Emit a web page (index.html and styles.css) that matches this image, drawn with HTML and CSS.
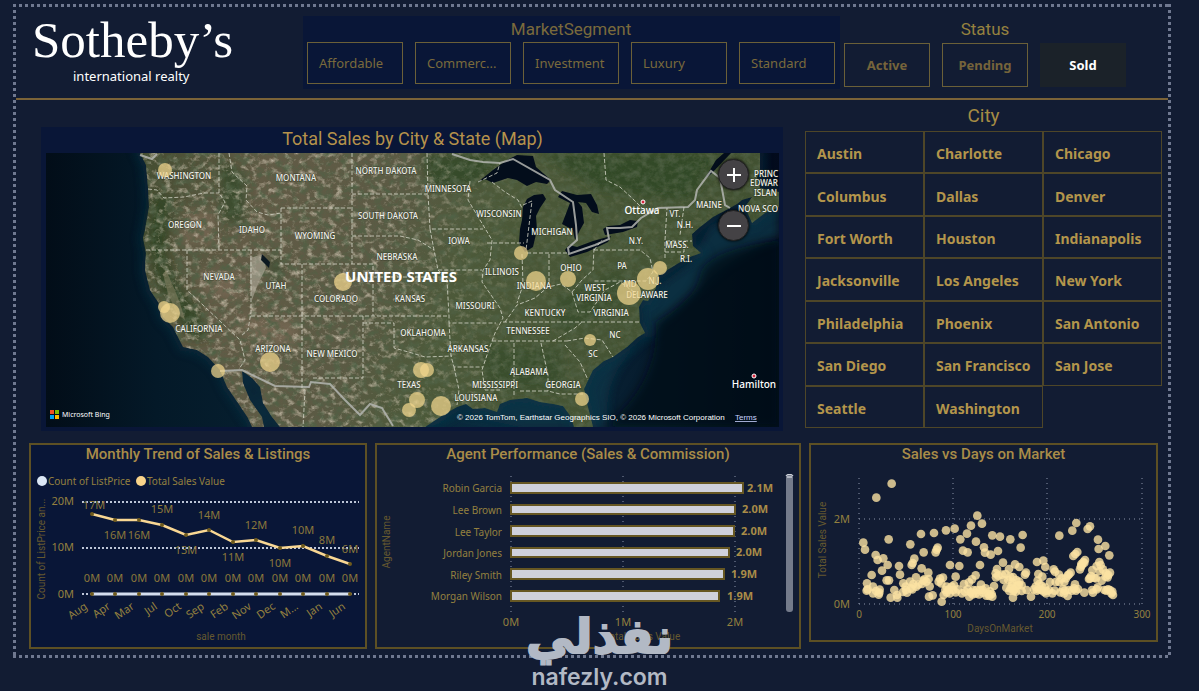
FILE: index.html
```html
<!DOCTYPE html>
<html lang="en">
<head>
<meta charset="utf-8">
<title>Sotheby's International Realty dashboard</title>
<link rel="stylesheet" href="styles.css">
</head>
<body>
<main class="report">
  <header class="header">
    <div class="brand">
      <h1 class="brand-name">Sotheby’s</h1>
      <p class="brand-sub">international realty</p>
    </div>
    <section class="slicer segment" aria-labelledby="segment-title">
      <h2 class="title" id="segment-title">MarketSegment</h2>
      <div class="tiles">
        <button class="tile">Affordable</button>
        <button class="tile">Commerc...</button>
        <button class="tile">Investment</button>
        <button class="tile">Luxury</button>
        <button class="tile">Standard</button>
      </div>
    </section>
    <section class="slicer status" aria-labelledby="status-title">
      <h2 class="title" id="status-title">Status</h2>
      <div class="tiles">
        <button class="tile">Active</button>
        <button class="tile">Pending</button>
        <button class="tile selected">Sold</button>
      </div>
    </section>
  </header>

  <div class="main-row">
    <section class="map-panel">
      <h2 class="title">Total Sales by City &amp; State (Map)</h2>
      <div class="map">
        <svg class="graphic" viewBox="46 153 733 274" role="img" aria-label="Map of sales by city">
          <defs>
            <linearGradient id="land" x1="0" x2="1" y1="0" y2=".15">
              <stop offset="0" stop-color="#434c30"/>
              <stop offset=".2" stop-color="#625b46"/>
              <stop offset=".42" stop-color="#5b5a44"/>
              <stop offset=".56" stop-color="#4c5939"/>
              <stop offset="1" stop-color="#405030"/>
            </linearGradient>
            <linearGradient id="sea" x1="0" x2="1">
              <stop offset="0" stop-color="#020d18"/>
              <stop offset=".15" stop-color="#041928"/>
              <stop offset=".6" stop-color="#0a2b3e"/>
              <stop offset=".85" stop-color="#061a2c"/>
              <stop offset="1" stop-color="#020a1c"/>
            </linearGradient>
            <filter id="grain" x="0" y="0" width="100%" height="100%">
              <feTurbulence type="fractalNoise" baseFrequency=".12 .14" numOctaves="5" seed="8" result="n"/>
              <feColorMatrix in="n" type="matrix" values="0 0 0 0 .08  0 0 0 0 .12  0 0 0 0 .06  2.2 0 0 0 -.95"/>
              <feComposite in2="SourceGraphic" operator="in"/>
            </filter>
            <filter id="light" x="0" y="0" width="100%" height="100%">
              <feTurbulence type="fractalNoise" baseFrequency=".14 .17" numOctaves="5" seed="31" result="n"/>
              <feColorMatrix in="n" type="matrix" values="0 0 0 0 .66  0 0 0 0 .59  0 0 0 0 .47  0 2 0 0 -.98"/>
              <feComposite in2="SourceGraphic" operator="in"/>
            </filter>
            <filter id="soft" x="-20%" y="-20%" width="140%" height="140%"><feGaussianBlur stdDeviation="5"/></filter>
            <linearGradient id="fade"><stop offset=".45" stop-color="#fff"/><stop offset=".65" stop-color="#fff" stop-opacity=".2"/></linearGradient>
            <mask id="west"><rect x="46" y="153" width="733" height="274" fill="url(#fade)"/></mask>
            <path id="coast" d="M140 153 L146 165 148 188 149 207 145 230 143 238 146 253 145 270 150 290 158 302 163 317 173 327 183 347 197 350 208 357 220 370 227 387 238 403 248 418 252 427 264 427 262 417 250 400 243 383 242 371 252 378 260 387 263 403 272 417 280 427 425 427 440 417 457 407 466 404 473 409 485 408 497 412 500 404 510 400 527 398 540 402 553 404 563 406 571 417 574 427 593 427 587 403 584 389 593 370 604 361 613 357 627 347 638 337 645 333 640 323 639 307 643 300 648 301 656 288 656 277 677 264 690 257 701 253 693 246 692 234 700 227 713 217 728 209 737 204 742 200 752 197 745 207 752 223 765 213 779 207 779 192 760 188 757 178 760 170 760 153Z"/>
            <clipPath id="mapclip"><rect x="46" y="153" width="733" height="274"/></clipPath>
          </defs>
          <g clip-path="url(#mapclip)">
            <rect x="46" y="153" width="733" height="274" fill="url(#sea)"/>
            <path d="M645 340 L640 300 L690 262 L710 225 L779 205 V238 Q720 262 700 290 Q670 310 655 335 Q600 365 608 427 H520 Q400 400 430 427 L600 360Z" fill="#0d3647" opacity=".8" filter="url(#soft)"/>
            <use href="#coast" fill="none" stroke="#0f3647" stroke-width="8" opacity=".6" filter="url(#soft)"/>
            <path d="M655 322 Q695 300 700 275 T779 240 V427 H605 Q660 380 655 322Z" fill="#010818" opacity=".75" filter="url(#soft)"/>
            <use href="#coast" fill="url(#land)"/>
            <g filter="url(#soft)" opacity=".7">
              <path d="M155 195 L170 198 165 252 178 285 200 310 208 340 190 340 158 285 148 240Z" fill="#27411f"/>
              <path d="M220 160 L245 175 245 225 222 220Z" fill="#2e4628"/>
              <path d="M272 250 L282 265 278 290 270 270Z" fill="#2f472a"/>
              <path d="M185 210 L215 210 215 245 178 245Z M195 270 L245 275 240 300 210 295Z M230 315 L300 320 295 350 250 340Z" fill="#7a6b56"/>
              <path d="M420 153 L510 153 475 185 430 190Z M540 153 L720 153 690 200 600 190Z" fill="#2c4423"/>
              <path d="M555 300 L620 270 625 300 560 335Z M480 345 L560 350 565 390 490 390Z" fill="#354c29"/>
            </g>
            <g mask="url(#west)"><use href="#coast" filter="url(#light)"/></g>
            <use href="#coast" filter="url(#grain)"/>
            <path d="M250 258 L263 254 266 268 258 284 252 300 250 280Z" fill="#b9b4a5" opacity=".55"/>
            <path d="M262 254 L270 262 269 268 261 260Z" fill="#0c1820"/>
            <path d="M166 270 L174 288 180 303 185 320 177 314 168 294 163 274Z" fill="#8b8567" opacity=".5"/>

            <g fill="#030d1b">
              <path d="M478 182 L493 170 507 160 517 155 533 156 536 167 551 180 547 184 536 182 527 186 517 180 508 178 493 183 485 179Z"/>
              <path d="M543 194 L546 199 540 208 536 216 537 230 533 247 525 252 519 243 520 229 522 220 523 207 527 199 534 195Z"/>
              <path d="M562 191 L577 195 591 194 597 205 599 214 592 212 586 203 578 202 582 207 584 223 580 230 575 240 573 230 562 224 567 211 570 203 558 197Z"/>
              <path d="M565 250 L570 257 587 252 608 242 611 236 593 241 577 247 569 245Z"/>
              <path d="M603 229 L605 235 623 232 637 227 638 221 630 220 620 225 608 226Z"/>
              <path d="M704 180 L716 160 724 153 731 153 712 173Z"/>
            </g>
            <g class="solid-border">
              <path d="M452 154 L470 160 483 162 500 163 513 159 550 180 555 190 573 202 576 225 577 240 568 248 569 254 595 245 609 239 607 228 620 228 632 227 641 218 658 208 688 207 695 200 697 190 711 171 720 178 725 205 730 208"/>
              <path d="M220 371 L242 370 275 386 309 387 311 382 330 384 345 400 360 415 370 404 382 408 393 426"/>
              <path d="M140 155 L152 159 157 154"/>
            </g>
            <g class="state-border">
              <path d="M148 189 L157 190 164 198 184 197 204 193 219 193 M219 153 V193 L225 202 218 215 219 250 M146 250 H281 M229 153 L232 172 247 186 246 200 257 212 268 215 281 213 M281 208 H352 M281 208 V264 H373 V316 M352 153 V264 M251 250 V312 L248 330 241 336 M302 264 V388 M251 316 H449 M187 250 V290 L240 340 245 360 239 369 M363 316 V378 H311 M363 323 H394 V348 L412 353 425 357 452 356 M305 390 L303 427"/>
              <path d="M352 194 H428 M352 236 H400 L418 240 434 250 M373 277 H437 M427 153 L428 194 430 229 H483 M430 229 L434 250 438 270 H482 M438 270 L447 280 449 316 V323 H496 M449 323 L451 356 454 367 H483 M454 367 L459 390 457 405"/>
              <path d="M470 181 L468 200 483 225 492 240 490 260 483 270 482 282 500 308 503 318 495 333 487 355 482 370 485 390 H500 M492 182 L505 192 518 200 522 208 M487 243 H524 M522 254 L523 285 517 303 M527 253 H567 M549 254 V285 M505 322 L517 305 535 298 548 287 561 284 572 292 582 280 593 270 594 248 M503 322 H640 M492 341 H567 M514 343 V397 M541 343 L548 375 V391 M520 391 H548 L560 394 H583 M565 345 L580 362 588 380 M567 341 L585 338 602 340 613 357 M553 341 L575 328 582 322"/>
              <path d="M594 250 H640 L650 258 653 272 646 281 H594 M572 292 L578 312 590 312 605 290 620 282 637 294 M594 250 L602 240 M665 258 V240 L667 208 M684 207 L680 235 M666 241 H692 M665 252 H684 V242 M604 153 L606 180 620 187 632 198 642 208 M478 182 L497 173 500 163 M523 205 L532 201 526 250"/>
            </g>
            <g class="map-label">
              <text x="184" y="179">WASHINGTON</text><text x="296" y="181">MONTANA</text><text x="386" y="174">NORTH DAKOTA</text><text x="448" y="192">MINNESOTA</text>
              <text x="185" y="228">OREGON</text><text x="252" y="233">IDAHO</text><text x="315" y="239">WYOMING</text><text x="388" y="219">SOUTH DAKOTA</text><text x="499" y="217">WISCONSIN</text>
              <text x="397" y="260">NEBRASKA</text><text x="459" y="244">IOWA</text><text x="552" y="235">MICHIGAN</text><text x="219" y="280">NEVADA</text><text x="276" y="289">UTAH</text>
              <text x="336" y="302">COLORADO</text><text x="410" y="302">KANSAS</text><text x="475" y="309">MISSOURI</text><text x="502" y="275">ILLINOIS</text><text x="534" y="289">INDIANA</text><text x="571" y="271">OHIO</text>
              <text x="622" y="269">PA</text><text x="636" y="244">N.Y.</text><text x="595" y="291">WEST</text><text x="594" y="301">VIRGINIA</text><text x="611" y="316">VIRGINIA</text><text x="630" y="287">MD</text><text x="655" y="284">N.J.</text><text x="647" y="298">DELAWARE</text>
              <text x="545" y="316">KENTUCKY</text><text x="528" y="334">TENNESSEE</text><text x="199" y="332">CALIFORNIA</text><text x="273" y="352">ARIZONA</text><text x="332" y="357">NEW MEXICO</text><text x="423" y="336">OKLAHOMA</text>
              <text x="468" y="352">ARKANSAS</text><text x="409" y="388">TEXAS</text><text x="529" y="375">ALABAMA</text><text x="495" y="388">MISSISSIPPI</text><text x="563" y="388">GEORGIA</text><text x="476" y="401">LOUISIANA</text><text x="615" y="338">NC</text><text x="593" y="357">SC</text>
              <text x="675" y="217">VT.</text><text x="685" y="228">N.H.</text><text x="677" y="248">MASS.</text><text x="686" y="262">R.I.</text><text x="709" y="208">MAINE</text>
              <text class="at-start" x="754" y="177">PRINC</text><text class="at-start" x="750" y="186">EDWAR</text><text class="at-start" x="754" y="196">ISLAN</text><text class="at-start" x="738" y="212">NOVA SCO</text>
            </g>
            <g class="bubbles">
              <circle cx="165" cy="170" r="7"/><circle cx="164" cy="307" r="6"/><circle cx="170" cy="313" r="10"/><circle cx="218" cy="371" r="7"/><circle cx="270" cy="362" r="10"/><circle cx="343" cy="282" r="9"/>
              <circle cx="421" cy="370" r="8"/><circle cx="427" cy="370" r="7"/><circle cx="417" cy="400" r="8"/><circle cx="409" cy="410" r="7"/><circle cx="441" cy="406" r="10"/>
              <circle cx="521" cy="253" r="7"/><circle cx="536" cy="281" r="10"/><circle cx="568" cy="279" r="8"/><circle cx="590" cy="340" r="6"/><circle cx="582" cy="399" r="7"/><circle cx="629" cy="293" r="12"/><circle cx="648" cy="279" r="11"/><circle cx="660" cy="268" r="7"/>
            </g>
            <g class="map-city"><circle cx="643" cy="202" r="2"/><circle cx="754" cy="376" r="2"/><text x="642" y="214">Ottawa</text><text x="754" y="388">Hamilton</text></g>
            <text class="country" x="401" y="282">UNITED STATES</text>
            <path fill="#f25022" d="M50 410h4v4h-4z"/><path fill="#7fba00" d="M55 410h4v4h-4z"/><path fill="#00a4ef" d="M50 415h4v4h-4z"/><path fill="#ffb900" d="M55 415h4v4h-4z"/>
            <text class="bing" x="62" y="417">Microsoft Bing</text>
            <text class="credit" x="457" y="420">© 2026 TomTom, Earthstar Geographics SIO, © 2026 Microsoft Corporation</text>
            <a href="#terms"><text class="credit terms" x="735" y="420">Terms</text></a>
          </g>
        </svg>
        <div class="zoom-controls">
          <button class="zoom-button" aria-label="Zoom in"><svg viewBox="0 0 16 16"><path d="M8 1v14M1 8h14"/></svg></button>
          <button class="zoom-button" aria-label="Zoom out"><svg viewBox="0 0 16 16"><path d="M1 8h14"/></svg></button>
        </div>
      </div>
    </section>

    <section class="city-panel" aria-labelledby="city-title">
      <h2 class="title" id="city-title">City</h2>
      <div class="city-grid">
        <button class="city">Austin</button><button class="city">Charlotte</button><button class="city">Chicago</button>
        <button class="city">Columbus</button><button class="city">Dallas</button><button class="city">Denver</button>
        <button class="city">Fort Worth</button><button class="city">Houston</button><button class="city">Indianapolis</button>
        <button class="city">Jacksonville</button><button class="city">Los Angeles</button><button class="city">New York</button>
        <button class="city">Philadelphia</button><button class="city">Phoenix</button><button class="city">San Antonio</button>
        <button class="city">San Diego</button><button class="city">San Francisco</button><button class="city">San Jose</button>
        <button class="city">Seattle</button><button class="city">Washington</button>
      </div>
    </section>
  </div>

  <div class="chart-row">
    <section class="card trend">
      <h2 class="title">Monthly Trend of Sales &amp; Listings</h2>
      <svg class="graphic" viewBox="31 467 334 180" role="img" aria-label="Line chart of sales by month">
        <circle cx="42" cy="481" r="5" fill="#dbe7f5"/><text class="label name" x="48" y="485">Count of ListPrice</text>
        <circle cx="141" cy="481" r="5" fill="#f9d48a"/><text class="label name" x="147" y="485">Total Sales Value</text>
        <g class="grid-heavy"><path d="M82 502H359"/><path d="M82 548H359"/><path d="M82 594H359"/></g>
        <text class="axis-title" text-anchor="middle" transform="translate(45 549) rotate(-90)">Count of ListPrice an...</text>
        <g class="label end"><text x="74" y="505">20M</text><text x="74" y="551">10M</text><text x="74" y="598">0M</text></g>
        <path d="M92 514 115 520 139 520 162 525 186 535 209 530 233 542 256 540 280 548 303 546 327 556 350 564" fill="none" stroke="#f9d793" stroke-width="2.5"/>
        <path d="M92 594H350" stroke="#d5deee" stroke-width="3"/>
        <g fill="#6f5a1c">
          <circle cx="92" cy="514" r="2"/><circle cx="115" cy="520" r="2"/><circle cx="139" cy="520" r="2"/><circle cx="162" cy="525" r="2"/><circle cx="186" cy="535" r="2"/><circle cx="209" cy="530" r="2"/><circle cx="233" cy="542" r="2"/><circle cx="256" cy="540" r="2"/><circle cx="280" cy="548" r="2"/><circle cx="303" cy="546" r="2"/><circle cx="327" cy="556" r="2"/><circle cx="350" cy="564" r="2"/>
          <circle cx="92" cy="594" r="2"/><circle cx="115" cy="594" r="2"/><circle cx="139" cy="594" r="2"/><circle cx="162" cy="594" r="2"/><circle cx="186" cy="594" r="2"/><circle cx="209" cy="594" r="2"/><circle cx="233" cy="594" r="2"/><circle cx="256" cy="594" r="2"/><circle cx="280" cy="594" r="2"/><circle cx="303" cy="594" r="2"/><circle cx="327" cy="594" r="2"/><circle cx="350" cy="594" r="2"/>
        </g>
        <g class="label mid dim">
          <text x="94" y="509">17M</text><text x="115" y="539">16M</text><text x="139" y="539">16M</text><text x="162" y="513">15M</text><text x="186" y="554">13M</text><text x="209" y="519">14M</text><text x="233" y="561">11M</text><text x="256" y="529">12M</text><text x="280" y="567">10M</text><text x="303" y="534">10M</text><text x="327" y="544">8M</text><text x="350" y="553">6M</text>
          <text x="92" y="582">0M</text><text x="115" y="582">0M</text><text x="139" y="582">0M</text><text x="162" y="582">0M</text><text x="186" y="582">0M</text><text x="209" y="582">0M</text><text x="233" y="582">0M</text><text x="256" y="582">0M</text><text x="280" y="582">0M</text><text x="303" y="582">0M</text><text x="327" y="582">0M</text><text x="350" y="582">0M</text>
        </g>
        <g class="label end">
          <text transform="translate(88 608) rotate(-35)">Aug</text><text transform="translate(111 608) rotate(-35)">Apr</text><text transform="translate(135 608) rotate(-35)">Mar</text><text transform="translate(158 608) rotate(-35)">Jul</text><text transform="translate(182 608) rotate(-35)">Oct</text><text transform="translate(205 608) rotate(-35)">Sep</text><text transform="translate(229 608) rotate(-35)">Feb</text><text transform="translate(252 608) rotate(-35)">Nov</text><text transform="translate(276 608) rotate(-35)">Dec</text><text transform="translate(299 608) rotate(-35)">M...</text><text transform="translate(323 608) rotate(-35)">Jan</text><text transform="translate(346 608) rotate(-35)">Jun</text>
        </g>
        <text class="axis-title mid" x="221" y="640">sale month</text>
      </svg>
    </section>

    <section class="card agents">
      <h2 class="title">Agent Performance (Sales &amp; Commission)</h2>
      <svg class="graphic" viewBox="377 466 422 181" role="img" aria-label="Bar chart of sales by agent">
        <g class="grid-light"><path d="M511 476V614"/><path d="M623 476V614"/><path d="M735 476V614"/></g>
        <text class="axis-title mid" transform="translate(390 542) rotate(-90)">AgentName</text>
        <g class="label name end"><text x="502" y="492">Robin Garcia</text><text x="502" y="514">Lee Brown</text><text x="502" y="536">Lee Taylor</text><text x="502" y="557">Jordan Jones</text><text x="502" y="579">Riley Smith</text><text x="502" y="600">Morgan Wilson</text></g>
        <g class="bar"><rect x="511" y="483" width="232" height="10"/><rect x="511" y="505" width="224" height="9"/><rect x="511" y="526" width="223" height="10"/><rect x="511" y="548" width="218" height="9"/><rect x="511" y="569" width="213" height="10"/><rect x="511" y="591" width="208" height="10"/></g>
        <g class="value"><text x="747" y="492">2.1M</text><text x="742" y="513">2.0M</text><text x="741" y="535">2.0M</text><text x="736" y="556">2.0M</text><text x="731" y="578">1.9M</text><text x="727" y="600">1.9M</text></g>
        <g class="label mid"><text x="511" y="626">0M</text><text x="623" y="626">1M</text><text x="735" y="626">2M</text></g>
        <text class="axis-title mid" x="642" y="640">Total Sales Value</text>
        <rect x="786" y="474" width="7" height="138" rx="3" fill="#747b8b"/><path d="M786 476c0-2 7-2 7 0M787 477h5" fill="none" stroke="#eef1f6"/>
      </svg>
    </section>

    <section class="card days">
      <h2 class="title">Sales vs Days on Market</h2>
      <svg class="graphic" viewBox="811 467 345 173" role="img" aria-label="Scatter chart of sales against days on market">
        <g class="grid-light"><path d="M859 478V604"/><path d="M953 478V604"/><path d="M1047 478V604"/><path d="M1142 478V604"/><path d="M859 519H1142"/><path d="M859 604H1142"/></g>
        <text class="axis-title mid" transform="translate(826 540) rotate(-90)">Total Sales Value</text>
        <g class="label end"><text x="850" y="523">2M</text><text x="850" y="608">0M</text></g>
        <g class="label name mid"><text x="859" y="618">0</text><text x="953" y="618">100</text><text x="1047" y="618">200</text><text x="1142" y="618">300</text></g>
        <text class="axis-title mid" x="1000" y="632">DaysOnMarket</text>
        <g id="listings" class="dots" transform="translate(800 430) scale(.3333)"></g>
      </svg>
    </section>
  </div>
</main>
<div class="watermark">
  <span class="watermark-ar" lang="ar" dir="rtl">نفذلي</span>
  <span class="watermark-en">nafezly.com</span>
</div>
<script src="listings.js"></script>
</body>
</html>
```

FILE: listings.js
```js
const listings = [
  [229,203],[275,161],[190,338],[195,359],[266,328],[227,375],[233,390],[250,385],[246,422],[263,405],[215,435],[297,408],[300,434],
  [201,460],[203,478],[200,482],[219,470],[219,490],[239,479],[236,494],[228,483],[238,488],[260,451],[267,451],[272,503],[283,480],[292,503],[291,495],[309,486],[317,470],[310,460],[330,455],[321,488],[318,480],[332,475],
  [331,343],[363,312],[402,309],[438,301],[464,296],[371,367],[407,367],[413,353],[410,359],[343,386],[335,405],[338,399],[365,415],[385,428],[348,442],[340,462],[355,464],[366,462],[373,448],[379,455],[349,470],[337,478],[389,469],[370,452],[386,447],
  [387,500],[398,496],[425,515],[420,446],[429,443],[424,460],[416,455],[450,405],[478,408],[467,440],[431,495],[440,487],[446,479],[440,470],[455,470],[460,480],[467,487],[462,465],[449,490],[436,480],[474,478],[486,490],[495,485],[508,500],[492,462],[512,487],[520,480],[527,490],
  [481,328],[501,311],[513,287],[532,257],[546,281],[528,335],[489,362],[503,367],[552,352],[555,368],[572,374],[594,363],[540,405],[527,436],[516,448],[507,457],[577,316],[600,320],[631,328],[668,315],[662,353],
  [543,464],[540,480],[549,488],[537,493],[557,475],[566,492],[559,497],[570,484],[582,468],[577,500],[568,498],[575,492],[530,480],[518,493],[503,478],[548,480],
  [609,398],[591,417],[587,430],[595,437],[588,442],[606,434],[611,450],[617,432],[627,417],[645,403],[658,411],[630,440],[625,450],[639,441],[637,458],[649,450],[658,455],[665,466],[651,468],[632,475],[641,483],[628,483],[619,473],[639,503],[648,485],[665,483],[637,466],[675,434],[678,428],[680,480],[693,500],[643,478],[656,465],
  [778,317],[829,279],[817,302],[863,297],[870,289],[894,329],[896,357],[916,348],[928,376],[820,378],[826,372],[832,366],[711,396],[730,392],[736,411],[715,432],[727,440],[713,452],[718,462],[707,470],[702,478],[717,478],[725,467],[735,473],[740,483],[731,485],[747,480],[738,490],[757,490],[764,482],[711,482],[725,480],[750,456],[767,456],[761,418],[765,425],[777,434],[778,456],[793,456],[785,445],[803,437],[812,428],[807,433],[798,445],[789,477],[781,487],[792,490],[803,498],[806,480],[816,482],[825,463],[828,482],[834,477],[795,482],[822,475],
  [840,418],[846,405],[843,410],[855,390],[850,396],[853,399],[844,402],[853,488],[867,447],[873,438],[879,488],[876,480],[877,420],[890,408],[898,396],[888,445],[883,443],[902,405],[909,418],[899,423],[905,452],[893,472],[890,478],[918,430],[930,428],[917,440],[923,442],[925,435],[913,480],[919,482],[930,480],[937,485],[939,495],[934,490],[924,478],[870,445]
];

const layer = document.getElementById("listings");
for (const [x, y] of listings) {
  const dot = document.createElementNS("http://www.w3.org/2000/svg", "circle");
  dot.setAttribute("cx", x);
  dot.setAttribute("cy", y);
  dot.setAttribute("r", 13);
  layer.append(dot);
}
```

FILE: styles.css
```css
* { box-sizing: border-box; }

body {
  position: relative;
  margin: 0;
  padding: 4px 28px 33px 13px;
  background: #121c33;
  color: #a98d46;
  font-family: "Noto Sans", "Open Sans", sans-serif;
}

h1, h2, p { margin: 0; }

button {
  margin: 0;
  padding: 0;
  border: 0;
  background: none;
  color: inherit;
  font: inherit;
}

.report {
  padding: 3px;
  background:
    repeating-linear-gradient(90deg, #6f7890 0 3px, transparent 3px 6px) top / 100% 3px no-repeat,
    repeating-linear-gradient(90deg, #6f7890 0 3px, transparent 3px 6px) bottom / 100% 3px no-repeat,
    repeating-linear-gradient(#6f7890 0 3px, transparent 3px 6px) left / 3px 100% no-repeat,
    repeating-linear-gradient(#6f7890 0 3px, transparent 3px 6px) right / 3px 100% no-repeat;
}

.title {
  font-family: Roboto, sans-serif;
  font-weight: 400;
  text-align: center;
}

.graphic { display: block; width: 100%; height: auto; }

.header {
  display: flex;
  align-items: flex-start;
  padding: 9px 42px 9px 16px;
  border-bottom: 2px solid #7b6338;
}

.brand { flex: 1; color: #fff; }
.brand-name { font: 400 51px/48px "Liberation Serif", serif; }
.brand-sub { padding-left: 41px; font-size: 13px; line-height: 24px; }

.segment { flex: 0 1 537px; padding: 0 5px 5px 4px; background: #091637; color: #7a6a3c; }
.status { flex: 0 1 286px; padding-left: 4px; color: #76643b; }
.header .title { font-size: 17px; line-height: 26px; }
.status .title { color: #95813f; }
.tiles { display: flex; gap: 12px; }
.tile { flex: 1; height: 42px; border: 1px solid #6b6038; }
.segment .tile { padding-left: 11px; font-size: 13px; text-align: left; }
.status .tile { height: 44px; font-size: 13px; font-weight: 700; }
.status .title { line-height: 27px; }
.tile.selected { border-color: #1b2229; background: #1b2229; color: #fff; }

.main-row {
  display: grid;
  grid-template-columns: minmax(0, 742fr) minmax(0, 357fr);
  gap: 22px;
  padding: 0 6px 12px 25px;
}

.map-panel { margin-top: 27px; padding: 0 4px 4px 5px; background: #091637; }
.map-panel .title { padding-bottom: 3px; color: #b5924b; font-size: 18px; line-height: 23px; }
.map { position: relative; }
.state-border path { fill: none; stroke: #d4d6c8; stroke-width: 1; stroke-dasharray: 4 2; opacity: .8; }
.solid-border path { fill: none; stroke: #b3b5b0; stroke-width: 2; opacity: .85; }
.bubbles { fill: #f3d78d; fill-opacity: .72; }
.map-label { fill: #f2f2ec; font-size: 8px; font-weight: 500; text-anchor: middle; paint-order: stroke; stroke: #28301f; stroke-opacity: .6; stroke-width: 1; }
.map-label .at-start { text-anchor: start; }
.map-city { fill: #fff; font-size: 10px; font-weight: 500; text-anchor: middle; }
.map-city circle { fill: #d8263c; stroke: #fff; }
.country { fill: #fff; font-size: 15px; font-weight: 700; text-anchor: middle; }
.bing { fill: #fff; font-size: 7px; }
.credit { fill: #fff; font-family: "Liberation Sans", sans-serif; font-size: 8px; }
.terms { text-decoration: underline; fill: #c9d4ff; }

.zoom-controls { position: absolute; top: 6px; right: 30px; display: flex; flex-direction: column; gap: 20px; }
.zoom-button { display: grid; place-items: center; width: 31px; height: 31px; border: 1px solid #222; border-radius: 50%; background: #444245; box-shadow: 0 0 3px #000; }
.zoom-button svg { width: 16px; height: 16px; fill: none; stroke: #fff; stroke-width: 2; }

.city-panel { display: flex; flex-direction: column; padding-bottom: 3px; }
.city-panel .title { color: #a58c44; font-size: 19px; line-height: 31px; }
.city-grid { flex: 1; display: grid; grid-template-columns: repeat(3, 1fr); grid-auto-rows: 1fr; }
.city { padding: 3px 0 0 11px; border: 1px solid #4e4628; color: #b3954b; font-size: 14px; font-weight: 700; line-height: 19px; text-align: left; }

.chart-row { display: grid; grid-template-columns: 338fr 426fr 349fr; align-items: start; gap: 8px; padding: 0 10px 6px 13px; }
.card { border: 2px solid #5d5024; }
.trend { background: #091637; }
.card .title { padding-bottom: 3px; color: #a98c48; font-size: 15px; font-weight: 500; line-height: 19px; }
.agents .title { line-height: 18px; }

.label { fill: #94803f; font-size: 11px; }
.label.name { font-size: 10px; }
.dim { fill: #8b783b; }
.axis-title { fill: #66592f; font-family: Roboto, sans-serif; font-size: 10px; }
.mid { text-anchor: middle; }
.end { text-anchor: end; }
.value { fill: #a98c48; font-size: 11px; font-weight: 700; }
.grid-heavy path { stroke: #bcc5d8; stroke-width: 2; stroke-dasharray: 2 2; }
.grid-light path { stroke: #8b94aa; stroke-dasharray: 1 4; }
.bar rect { fill: #cfd1dc; stroke: #665723; stroke-width: 2; }
.dots circle { fill: #fbe2a2; fill-opacity: .8; }

.watermark { position: absolute; right: 0; bottom: 0; left: 0; display: flex; flex-direction: column; align-items: center; color: #b2b9c5; pointer-events: none; }
.watermark-ar { font: 700 48px/54px "DejaVu Sans", sans-serif; -webkit-text-stroke: 2px currentColor; }
.watermark-en { font: 600 23px/28px Inter, sans-serif; }
```
